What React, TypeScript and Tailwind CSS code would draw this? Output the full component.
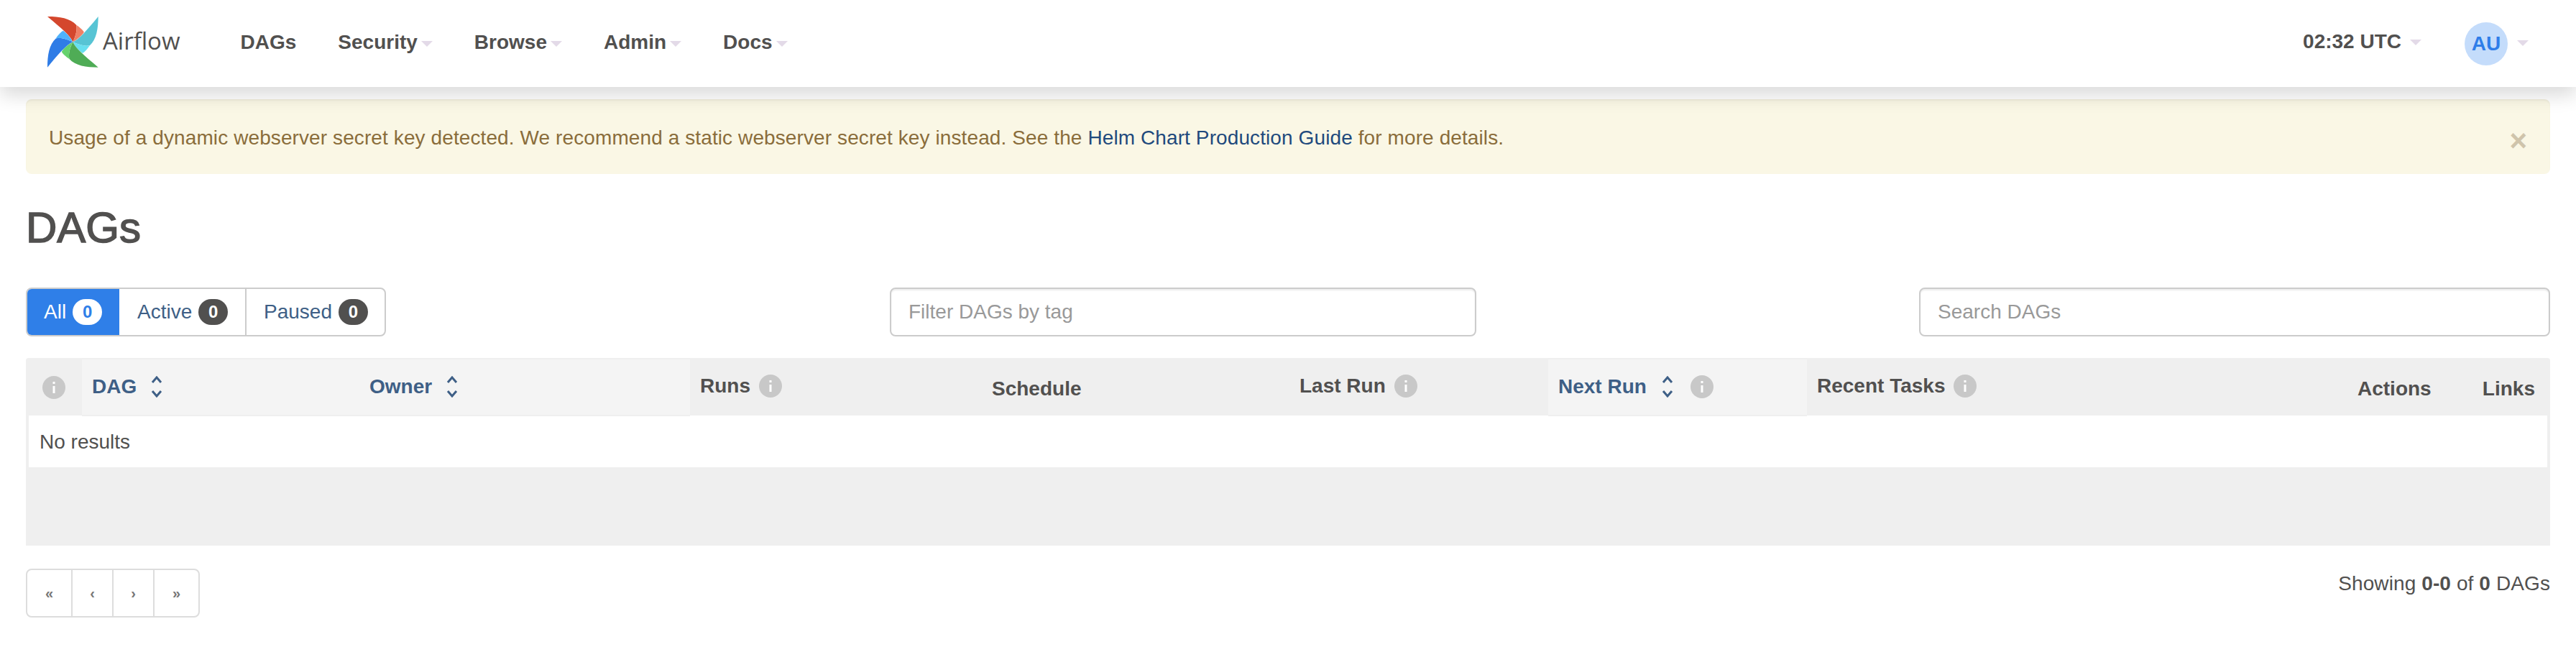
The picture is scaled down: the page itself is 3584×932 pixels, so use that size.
import React from 'react';

const Caret = ({ className = '' }: { className?: string }) => (
  <span className={`inline-block w-0 h-0 border-x-8 border-t-8 border-x-transparent border-t-[#e3dae8] ${className}`} />
);

const Logo = () => {
  const blades = [
    { angle: 0, main: '#d4472d', light: '#ef8066' },
    { angle: 90, main: '#57c4d4', light: '#67dfef' },
    { angle: 180, main: '#4fac56', light: '#66d26d' },
    { angle: 270, main: '#2f7ce6', light: '#50b2fb' },
  ];
  return (
    <svg viewBox="80 55 212 212" className="w-[71px] h-[71px] shrink-0">
      {blades.map((b) => (
        <g key={b.angle} transform={`rotate(${b.angle} 185.5 160.5)`}>
          <path d="M80 55C130 55 175 62 200 90C205 115 195 140 185.5 160.5C175 135 140 105 80 55Z" fill={b.main} />
          <path d="M200 90C215 100 228 112 232 120C222 135 205 150 185.5 160.5C195 140 205 115 200 90Z" fill={b.light} />
        </g>
      ))}
    </svg>
  );
};

const InfoIcon = () => (
  <svg viewBox="0 0 32 32" className="w-8 h-8 inline-block shrink-0">
    <circle cx="16" cy="16" r="16" fill="#c8c8c8" />
    <rect x="14.5" y="14" width="3" height="10" fill="#fff" />
    <rect x="14.5" y="8" width="3" height="3" fill="#fff" />
  </svg>
);

const SortIcon = () => (
  <svg viewBox="0 0 16 30" className="w-4 h-[30px] inline-block shrink-0" fill="none" stroke="#3e5f86" strokeWidth="3">
    <polyline points="2,9 8,2 14,9" />
    <polyline points="2,21 8,28 14,21" />
  </svg>
);

const NavItem = ({ label, caret = true }: { label: string; caret?: boolean }) => (
  <li className="flex items-center">
    <span className="font-bold">{label}</span>
    {caret && <Caret className="ml-[5px] mt-1" />}
  </li>
);

const Badge = ({ className }: { className: string }) => (
  <span className={`w-[41px] h-9 rounded-full flex items-center justify-center text-2xl font-bold ml-[9px] ${className}`}>0</span>
);

const SortHeader = ({ label }: { label: string }) => (
  <span className="flex items-center gap-5 text-[#3e5f86] -mt-[2px]">
    {label}
    <SortIcon />
  </span>
);

const InfoHeader = ({ label }: { label: string }) => (
  <span className="flex items-center gap-3 -mt-[3px]">
    {label}
    <InfoIcon />
  </span>
);

export default function App() {
  return (
    <div className="font-['Liberation_Sans',Arial,sans-serif] text-[28px] text-[#51504f] bg-white min-h-[932px]">
      <nav className="relative z-10 h-[121px] bg-white flex items-center pl-[66px] pr-[66px] shadow-[0_12px_24px_rgba(0,0,0,0.14)]">
        <div className="flex items-center -mt-[4px]">
          <Logo />
          <span className="font-['Open_Sans',sans-serif] text-[33px] ml-[6px] -mt-[4px]">Airflow</span>
        </div>
        <ul className="flex items-center gap-[58px] ml-[84px] -mt-[4px]">
          <NavItem label="DAGs" caret={false} />
          <NavItem label="Security" />
          <NavItem label="Browse" />
          <NavItem label="Admin" />
          <NavItem label="Docs" />
        </ul>
        <div className="ml-auto flex items-center">
          <span className="font-bold -mt-[6px]">02:32 UTC</span>
          <Caret className="ml-3 -mt-[4px]" />
          <span className="ml-[60px] w-[60px] h-[60px] rounded-full bg-[#c4dcfb] text-[#2e7de9] font-bold flex items-center justify-center">AU</span>
          <Caret className="ml-[13px] -mt-[2px]" />
        </div>
      </nav>

      <main className="px-9">
        <div className="mt-[17px] h-[104px] rounded-lg bg-[#faf7e5] shadow-[inset_0_2px_2px_rgba(0,0,0,0.04)] text-[#8a6d3b] flex items-center justify-between pl-8 pr-8">
          <span className="mt-1 tracking-[0.1px]">
            Usage of a dynamic webserver secret key detected. We recommend a static webserver secret key instead. See the{' '}
            <a className="text-[#1f4a7d]">Helm Chart Production Guide</a> for more details.
          </span>
          <span className="text-[42px] font-bold leading-none text-[#cfc4ab] mt-3">×</span>
        </div>

        <h1 className="mt-[42px] text-[60px] leading-[66px] [-webkit-text-stroke:1.5px_#51504f]">DAGs</h1>

        <div className="mt-[50px] flex items-stretch h-[68px]">
          <div className="w-[501px] flex rounded-lg border-2 border-[#ccc] overflow-hidden">
            <button className="w-[130px] -my-[2px] -ml-[2px] bg-[#2f7fe8] text-white flex items-center pl-[25px]">
              All
              <Badge className="bg-white text-[#2f7fe8]" />
            </button>
            <button className="w-[177px] border-r-2 border-[#ccc] text-[#3e5f86] flex items-center pl-[25px]">
              Active
              <Badge className="bg-[#51504f] text-white" />
            </button>
            <button className="flex-1 text-[#3e5f86] flex items-center pl-6">
              Paused
              <Badge className="bg-[#51504f] text-white" />
            </button>
          </div>
          <input
            placeholder="Filter DAGs by tag"
            className="ml-[701px] w-[816px] rounded-lg border-2 border-[#ccc] px-6 shadow-[inset_0_2px_2px_rgba(0,0,0,0.075)] placeholder:text-[#999]"
          />
          <input
            placeholder="Search DAGs"
            className="ml-auto w-[878px] rounded-lg border-2 border-[#ccc] px-6 shadow-[inset_0_2px_2px_rgba(0,0,0,0.075)] placeholder:text-[#999]"
          />
        </div>

        <div className="mt-[30px] h-[261px] bg-[#efefef] rounded-t">
          <table className="w-full table-fixed border-collapse">
            <colgroup>
              <col className="w-[76px]" />
              <col className="w-[386px]" />
              <col className="w-[460px]" />
              <col className="w-[406px]" />
              <col className="w-[428px]" />
              <col className="w-[360px]" />
              <col className="w-[360px]" />
              <col className="w-[752px]" />
              <col />
            </colgroup>
            <thead>
              <tr className="h-[79px] font-bold text-left">
                <th className="pl-[21px]"><span className="flex"><InfoIcon /></span></th>
                <th className="px-[14px] bg-[#f4f4f4] border-y-2 border-[#efefef]"><SortHeader label="DAG" /></th>
                <th className="px-[14px] bg-[#f4f4f4] border-y-2 border-[#efefef]"><SortHeader label="Owner" /></th>
                <th className="px-[14px]"><InfoHeader label="Runs" /></th>
                <th className="px-[14px] pt-1">Schedule</th>
                <th className="px-[14px]"><InfoHeader label="Last Run" /></th>
                <th className="px-[14px] bg-[#f4f4f4] border-y-2 border-[#efefef]">
                  <span className="flex items-center text-[#3e5f86] -mt-[2px]">
                    Next Run
                    <span className="ml-[21px] mr-6 flex"><SortIcon /></span>
                    <InfoIcon />
                  </span>
                </th>
                <th className="px-[14px]"><InfoHeader label="Recent Tasks" /></th>
                <th className="pl-[14px] pt-1 whitespace-nowrap">
                  <span className="flex justify-between pr-[19px]"><span>Actions</span><span>Links</span></span>
                </th>
              </tr>
            </thead>
            <tbody>
              <tr className="h-[72px]">
                <td colSpan={9} className="bg-white border-x-4 border-[#efefef] pl-[15px]">No results</td>
              </tr>
            </tbody>
          </table>
        </div>

        <div className="mt-8 flex justify-between items-start">
          <div className="flex h-[68px] w-[242px] rounded-lg border-2 border-[#ddd] text-[#777] text-xl font-bold">
            <button className="flex-1 border-r-2 border-[#ddd]">«</button>
            <button className="w-[57px] border-r-2 border-[#ddd]">‹</button>
            <button className="w-[57px] border-r-2 border-[#ddd]">›</button>
            <button className="flex-1">»</button>
          </div>
          <p className="leading-10 mt-px tracking-[0.1px]">
            Showing <strong>0-0</strong> of <strong>0</strong> DAGs
          </p>
        </div>
      </main>
    </div>
  );
}
